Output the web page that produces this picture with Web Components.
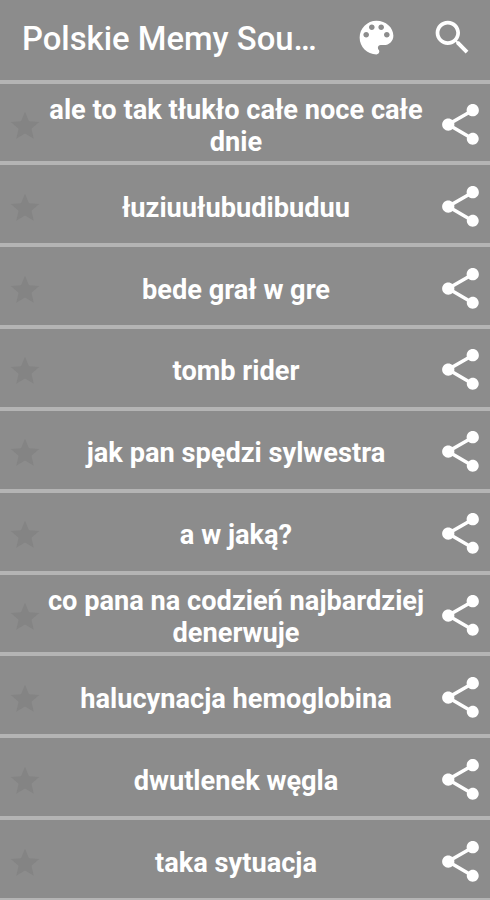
<!DOCTYPE html>
<html lang="pl">
<head>
<meta charset="utf-8">
<title>Polskie Memy Soundboard</title>
<style>
  body {
    margin: 0;
    height: 900px;
    overflow: hidden;
    background: #8c8c8c;
    color: #fff;
    font-family: Roboto, "Liberation Sans", sans-serif;
  }
</style>
</head>
<body>
<sound-board>
  <app-bar slot="bar">Polskie Memy Sou…</app-bar>
  <sound-row>ale to tak tłukło całe noce całe dnie</sound-row>
  <sound-row>łuziuułubudibuduu</sound-row>
  <sound-row>bede grał w gre</sound-row>
  <sound-row>tomb rider</sound-row>
  <sound-row>jak pan spędzi sylwestra</sound-row>
  <sound-row>a w jaką?</sound-row>
  <sound-row>co pana na codzień najbardziej denerwuje</sound-row>
  <sound-row>halucynacja hemoglobina</sound-row>
  <sound-row>dwutlenek węgla</sound-row>
  <sound-row>taka sytuacja</sound-row>
</sound-board>

<script>
const ICONS = {
  palette: 'M12 3c-4.97 0-9 4.03-9 9s4.03 9 9 9c.83 0 1.5-.67 1.5-1.5 0-.39-.15-.74-.39-1.01-.23-.26-.38-.61-.38-.99 0-.83.67-1.5 1.5-1.5H16c2.76 0 5-2.24 5-5 0-4.42-4.03-8-9-8zm-5.5 9c-.83 0-1.5-.67-1.5-1.5S5.67 9 6.5 9 8 9.67 8 10.5 7.33 12 6.5 12zm3-4C8.67 8 8 7.33 8 6.5S8.67 5 9.5 5s1.5.67 1.5 1.5S10.33 8 9.5 8zm5 0c-.83 0-1.5-.67-1.5-1.5S13.67 5 14.5 5s1.5.67 1.5 1.5S15.33 8 14.5 8zm3 4c-.83 0-1.5-.67-1.5-1.5S16.67 9 17.5 9s1.5.67 1.5 1.5-.67 1.5-1.5 1.5z',
  search: 'M15.5 14h-.79l-.28-.27C15.41 12.59 16 11.11 16 9.5 16 5.91 13.09 3 9.5 3S3 5.91 3 9.5 5.91 16 9.5 16c1.61 0 3.09-.59 4.23-1.57l.27.28v.79l5 4.99L20.49 19l-4.99-5zm-6 0C7.01 14 5 11.99 5 9.5S7.01 5 9.5 5 14 7.01 14 9.5 11.99 14 9.5 14z',
  share: 'M18 16.08c-.76 0-1.44.3-1.96.77L8.91 12.7c.05-.23.09-.46.09-.7s-.04-.47-.09-.7l7.05-4.11c.54.5 1.25.81 2.04.81 1.66 0 3-1.34 3-3s-1.34-3-3-3-3 1.34-3 3c0 .24.04.47.09.7L8.04 9.81C7.5 9.31 6.79 9 6 9c-1.66 0-3 1.34-3 3s1.34 3 3 3c.79 0 1.5-.31 2.04-.81l7.12 4.16c-.05.21-.08.43-.08.65 0 1.61 1.31 2.92 2.92 2.92s2.92-1.31 2.92-2.92-1.31-2.92-2.92-2.92z',
  star: 'M12 17.27L18.18 21l-1.64-7.03L22 9.24l-7.19-.61L12 2 9.19 8.63 2 9.24l5.46 4.73L5.82 21z'
};

class SoundIcon extends HTMLElement {
  constructor() {
    super();
    this.attachShadow({ mode: 'open' });
  }

  connectedCallback() {
    this.shadowRoot.innerHTML = `
      <style>
        :host { display: block; flex: none; width: var(--icon-size, 24px); height: var(--icon-size, 24px); }
        svg { display: block; width: 100%; height: 100%; fill: currentColor; }
      </style>
      <svg viewBox="0 0 24 24" aria-hidden="true"><path d="${ICONS[this.getAttribute('name')]}"/></svg>
    `;
  }
}

const barTemplate = document.createElement('template');
barTemplate.innerHTML = `
  <style>
    :host {
      display: flex;
      align-items: center;
      box-sizing: border-box;
      height: 79.5px;
      padding: 0 15px 5px 22px;
      --icon-size: 45px;
    }
    .title {
      flex: 1;
      font-size: 32.8px;
      font-weight: 500;
      line-height: 40px;
      padding-top: 3px;
      white-space: nowrap;
    }
    .actions { display: flex; gap: 31px; }
  </style>
  <div class="title"><slot></slot></div>
  <div class="actions">
    <sound-icon name="palette"></sound-icon>
    <sound-icon name="search"></sound-icon>
  </div>
`;

class AppBar extends HTMLElement {
  constructor() {
    super();
    this.attachShadow({ mode: 'open' });
    this.shadowRoot.appendChild(barTemplate.content.cloneNode(true));
  }
}

const rowTemplate = document.createElement('template');
rowTemplate.innerHTML = `
  <style>
    :host {
      display: grid;
      grid-template-columns: 34px 388px 49px;
      align-items: center;
      box-sizing: border-box;
      height: 81.85px;
      padding: 4px 0 0 8px;
      border-top: 4px solid #b4b4b4;
    }
    .star { --icon-size: 34px; color: #848484; margin-top: 3px; }
    .share { --icon-size: 49px; margin-left: 6px; }
    .label {
      font-size: 27.2px;
      font-weight: 700;
      line-height: 32px;
      text-align: center;
      padding-top: 3px;
    }
  </style>
  <sound-icon class="star" name="star"></sound-icon>
  <div class="label"><slot></slot></div>
  <sound-icon class="share" name="share"></sound-icon>
`;

class SoundRow extends HTMLElement {
  constructor() {
    super();
    this.attachShadow({ mode: 'open' });
    this.shadowRoot.appendChild(rowTemplate.content.cloneNode(true));
  }
}

class SoundBoard extends HTMLElement {
  constructor() {
    super();
    this.attachShadow({ mode: 'open' });
    this.shadowRoot.innerHTML = `
      <style>
        :host { display: block; width: 490px; }
        .list { display: flex; flex-direction: column; border-bottom: 4px solid #b4b4b4; }
      </style>
      <slot name="bar"></slot>
      <div class="list"><slot></slot></div>
    `;
  }
}

customElements.define('sound-icon', SoundIcon);
customElements.define('app-bar', AppBar);
customElements.define('sound-row', SoundRow);
customElements.define('sound-board', SoundBoard);
</script>
</body>
</html>
